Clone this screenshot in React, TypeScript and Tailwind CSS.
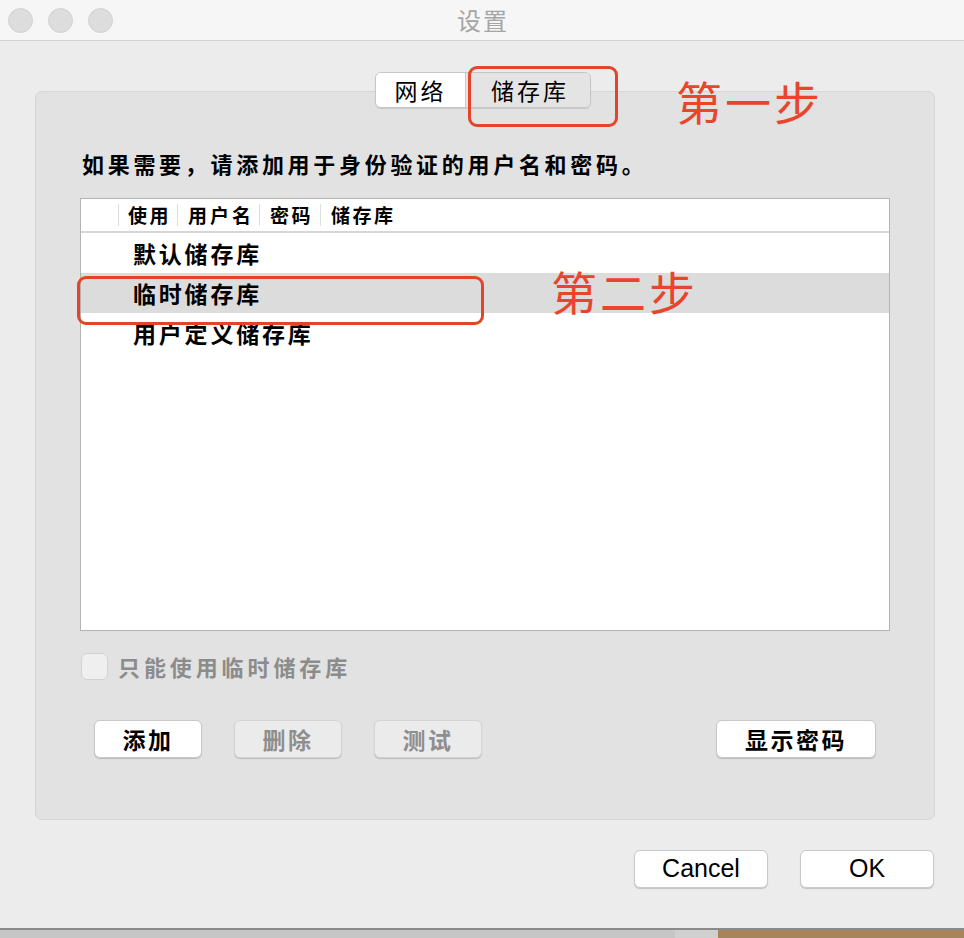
import React from "react";

const CJK = { fontFamily: '"Noto Sans CJK SC", "Noto Sans", sans-serif' };
const LATIN = { fontFamily: '"Liberation Sans", Arial, sans-serif' };

function Btn({
  label,
  width,
  disabled,
  latin,
}: {
  label: string;
  width: string;
  disabled?: boolean;
  latin?: boolean;
}) {
  return (
    <div
      className={`${width} h-[38px] flex items-center justify-center rounded-[6px] border border-[#c9c9c9] shadow-[0_1px_1px_rgba(0,0,0,0.18)] ${
        disabled ? "bg-[#ebebeb] text-[#8e8e8e] border-[#d4d4d4]" : "bg-white text-black"
      } ${latin ? "text-[25px]" : "text-[23px] font-semibold tracking-[2.5px]"}`}
      style={latin ? LATIN : CJK}
    >
      {label}
    </div>
  );
}

export default function App() {
  return (
    <div className="w-[964px] h-[938px] flex flex-col bg-[#ececec] overflow-hidden relative" style={CJK}>
      {/* title bar */}
      <div className="h-[41px] shrink-0 bg-[#f6f6f6] border-b border-[#d2d2d2] relative flex items-center">
        <div className="flex items-center gap-[15px] pl-[8px]">
          <div className="w-[25px] h-[25px] rounded-full bg-[#dddddd] border border-[#d2d2d2]" />
          <div className="w-[25px] h-[25px] rounded-full bg-[#dddddd] border border-[#d2d2d2]" />
          <div className="w-[25px] h-[25px] rounded-full bg-[#dddddd] border border-[#d2d2d2]" />
        </div>
        <div className="absolute inset-0 flex items-center justify-center pl-[2px] text-[24px] text-[#a5a5a5] tracking-[2px]">
          设置
        </div>
      </div>

      {/* body */}
      <div className="flex-1 flex flex-col">
        {/* segmented tabs */}
        <div className="mt-[31px] flex justify-center relative z-10">
          <div className="flex h-[36px] rounded-[6px] border border-[#c6c6c6] shadow-[0_1px_1px_rgba(0,0,0,0.12)] overflow-hidden ml-[2px]">
            <div className="w-[89px] bg-white flex items-center justify-center text-[23px] tracking-[3px] text-black">网络</div>
            <div className="w-[125px] bg-[#e4e4e4] border-l border-[#c9c9c9] flex items-center justify-center pl-[4px] text-[23px] tracking-[3px] text-black">
              储存库
            </div>
          </div>
        </div>

        {/* tab panel */}
        <div className="-mt-[17px] ml-[35px] w-[900px] h-[729px] bg-[#e2e2e2] border border-[#d6d6d6] rounded-[7px] flex flex-col">
          <div className="mt-[57px] ml-[46px] text-[22px] font-bold tracking-[3.7px] text-black leading-[28px]">
            如果需要，请添加用于身份验证的用户名和密码。
          </div>

          {/* table */}
          <div className="mt-[21px] ml-[44px] w-[810px] h-[433px] bg-white border border-[#b3b3b3] flex flex-col">
            <div className="h-[34px] flex items-center border-b-2 border-[#d6d6d6] text-[19px] font-semibold text-black">
              <div className="w-[38px] h-[22px] border-r border-[#dedede]" />
              <div className="w-[59px] h-[22px] border-r border-[#dedede] pl-[9px] leading-[22px] tracking-[2.5px]">使用</div>
              <div className="w-[82px] h-[22px] border-r border-[#dedede] pl-[10px] leading-[22px] tracking-[3px]">用户名</div>
              <div className="w-[61px] h-[22px] border-r border-[#dedede] pl-[10px] leading-[22px] tracking-[2.5px]">密码</div>
              <div className="pl-[10px] leading-[22px] tracking-[2.5px]">储存库</div>
            </div>
            <div className="h-[40px] flex items-center pl-[52px] text-[23px] font-semibold tracking-[2.8px] text-black">默认储存库</div>
            <div className="h-[40px] flex items-center pl-[52px] text-[23px] font-semibold tracking-[2.8px] text-black bg-[#dcdcdc]">临时储存库</div>
            <div className="h-[40px] flex items-center pl-[52px] text-[23px] font-semibold tracking-[2.8px] text-black">用户定义储存库</div>
          </div>

          {/* checkbox */}
          <div className="mt-[19px] ml-[45px] flex items-center gap-[10px]">
            <div className="w-[27px] h-[27px] rounded-[6px] bg-[#efefef] border border-[#d2d2d2]" />
            <div className="text-[22px] font-semibold tracking-[3.9px] text-[#8c8c8c]">只能使用临时储存库</div>
          </div>

          {/* action buttons */}
          <div className="mt-[37px] ml-[58px] mr-[58px] flex items-center">
            <div className="flex gap-[32px]">
              <Btn label="添加" width="w-[108px]" />
              <Btn label="删除" width="w-[108px]" disabled />
              <Btn label="测试" width="w-[108px]" disabled />
            </div>
            <div className="ml-auto">
              <Btn label="显示密码" width="w-[160px]" />
            </div>
          </div>
        </div>

        {/* dialog buttons */}
        <div className="mt-[30px] flex justify-end gap-[32px] pr-[30px]">
          <Btn label="Cancel" width="w-[134px]" latin />
          <Btn label="OK" width="w-[134px]" latin />
        </div>
      </div>

      {/* desktop strip below the window */}
      <div className="h-[10px] shrink-0 border-t-2 border-[#8a8a8a] flex">
        <div className="w-[675px] bg-[#c6c6c6]" />
        <div className="w-[43px] bg-[#d0d0d0]" />
        <div className="flex-1 bg-[#a8845b]" />
      </div>

      {/* step annotations */}
      <div className="absolute left-[468px] top-[66px] w-[150px] h-[61px] border-[3px] border-[#e5442c] rounded-[9px] z-20" />
      <div className="absolute left-[676px] top-[70px] text-[46px] leading-[60px] text-[#e8452c] tracking-[3px] z-20">第一步</div>
      <div className="absolute left-[77px] top-[276px] w-[407px] h-[49px] border-[3px] border-[#e5442c] rounded-[9px] z-20" />
      <div className="absolute left-[551px] top-[260px] text-[46px] leading-[60px] text-[#e8452c] tracking-[3px] z-20">第二步</div>
    </div>
  );
}
